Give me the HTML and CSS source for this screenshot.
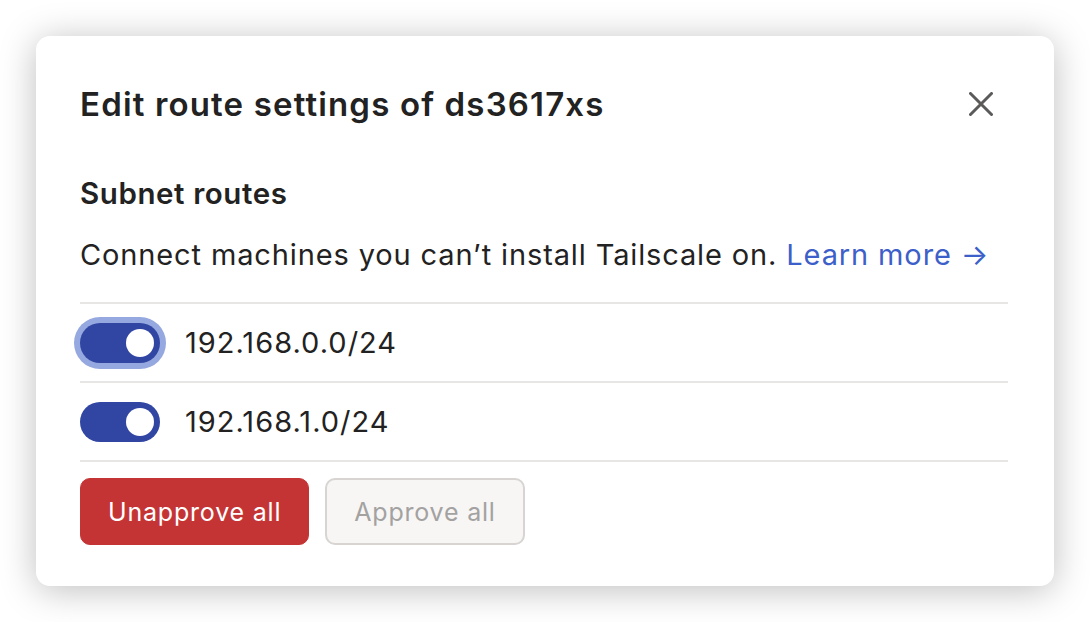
FILE: index.html
```html
<!DOCTYPE html>
<html>
<head>
<meta charset="utf-8">
<link rel="stylesheet" href="styles.css">
</head>
<body>
<div class="dialog">
  <div class="header">
    <h1 class="title">Edit route settings of ds3617xs</h1>
    <button class="close" aria-label="Close">
      <svg width="24" height="24" viewBox="0 0 24 24"><path d="M1.5 1.5L22.5 22.5M22.5 1.5L1.5 22.5" stroke="#5b5a59" stroke-width="3" stroke-linecap="round"/></svg>
    </button>
  </div>
  <h2 class="section">Subnet routes</h2>
  <p class="desc">Connect machines you can’t install Tailscale on. <a class="link" href="#">Learn more →</a></p>
  <div class="routes">
    <div class="route">
      <span class="toggle focus"><span class="knob"></span></span>
      <span class="addr">192.168.0.0/24</span>
    </div>
    <div class="route">
      <span class="toggle"><span class="knob"></span></span>
      <span class="addr">192.168.1.0/24</span>
    </div>
  </div>
  <div class="actions">
    <button class="btn danger">Unapprove all</button>
    <button class="btn disabled">Approve all</button>
  </div>
</div>
</body>
</html>
```
FILE: styles.css
```css
html, body { margin: 0; padding: 0; background: #ffffff; }
body {
  padding: 36px;
  font-family: Inter, "Noto Sans", sans-serif;
  color: #232222;
  letter-spacing: 0.04em;
}
.dialog {
  width: 1018px;
  height: 550px;
  box-sizing: border-box;
  background: #fff;
  border-radius: 14px;
  box-shadow: 0 4px 36px rgba(0,0,0,0.26);
  padding: 44px 46px 42px 44px;
}
.header {
  display: flex;
  align-items: center;
  justify-content: space-between;
  height: 48px;
}
.title {
  margin: 0;
  font-size: 33px;
  font-weight: 600;
  line-height: 48px;
  letter-spacing: 0.035em;
}
.close {
  border: 0;
  background: none;
  padding: 0;
  width: 24px;
  height: 24px;
  margin-right: 15px;
  display: flex;
}
.section {
  margin: 47px 0 0;
  font-size: 29.5px;
  font-weight: 600;
  line-height: 36px;
  letter-spacing: 0.02em;
}
.desc {
  margin: 24px 0 0;
  font-size: 29px;
  line-height: 40px;
  letter-spacing: 0.03em;
}
.link { color: #3d5fc9; text-decoration: none; }
.routes {
  margin-top: 27px;
  border-top: 2px solid #e8e5e5;
}
.route {
  display: flex;
  align-items: center;
  gap: 25px;
  height: 77px;
  border-bottom: 2px solid #e8e5e5;
}
.toggle {
  width: 80px;
  height: 40px;
  border-radius: 20px;
  background: #3146a3;
  display: flex;
  align-items: center;
  justify-content: flex-end;
  padding-right: 6px;
  box-sizing: border-box;
  flex: none;
}
.toggle.focus { box-shadow: 0 0 0 6px #95a8df; }
.knob {
  width: 28px;
  height: 28px;
  border-radius: 50%;
  background: #fff;
}
.addr {
  font-size: 29px;
  line-height: 40px;
  letter-spacing: 0.035em;
}
.actions {
  display: flex;
  gap: 16px;
  margin-top: 16px;
}
.btn {
  height: 67px;
  border-radius: 10px;
  font-family: Inter, "Noto Sans", sans-serif;
  font-size: 25px;
  letter-spacing: 0.032em;
  padding: 0 27px;
  box-sizing: border-box;
}
.danger {
  background: #c53434;
  color: #fff;
  border: 1px solid #c53434;
}
.disabled {
  background: #f7f6f5;
  color: #a3a2a1;
  border: 2px solid #d7d4d2;
}
```
